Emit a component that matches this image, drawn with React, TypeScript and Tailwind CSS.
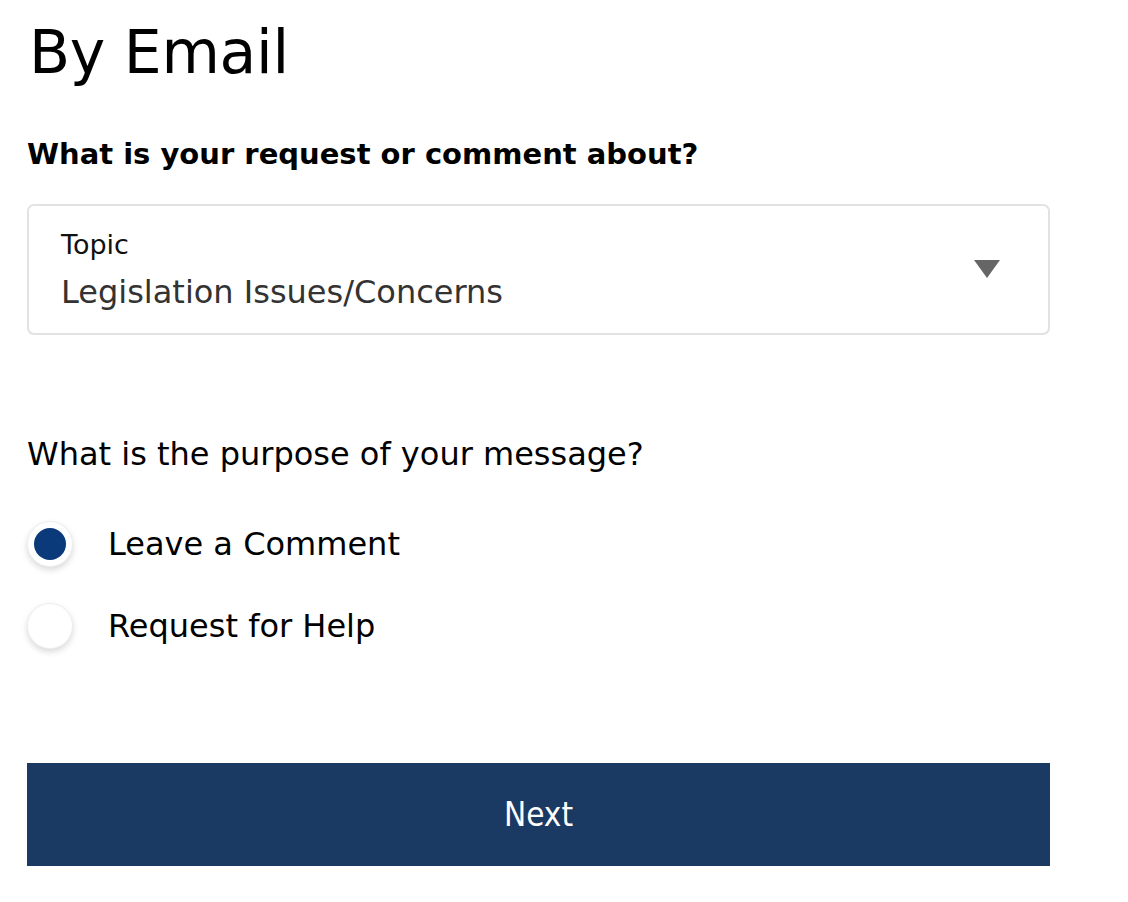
import { useState } from 'react'

const options = ['Leave a Comment', 'Request for Help']

export default function App() {
  const [purpose, setPurpose] = useState(options[0])

  return (
    <main className="min-h-screen bg-white text-black" style={{ fontFamily: '"DejaVu Sans", "Open Sans", sans-serif' }}>
      <div className="w-[1023px] ml-[27px] pt-[12px]">
        <h1 className="text-[60px] leading-[80px] font-normal ml-[2px] tracking-[-0.3px]">By Email</h1>

        <p className="mt-[44px] text-[29px] leading-[36px] font-semibold">What is your request or comment about?</p>

        {/* Topic select */}
        <div className="mt-[32px] h-[131px] border-2 border-[#e2e2e2] rounded-[7px] flex items-center justify-between pl-[32px] pr-[48px]">
          <div className="flex flex-col">
            <span className="text-[27px] leading-[30px] text-[#111]">Topic</span>
            <span className="mt-[14px] text-[32px] leading-[36px] text-[#333]">Legislation Issues/Concerns</span>
          </div>
          <svg width="26" height="18" viewBox="0 0 26 18" className="mt-[-2px]">
            <polygon points="0,0 26,0 13,18" fill="#666" />
          </svg>
        </div>

        <p className="mt-[101px] text-[32px] leading-[36px]">What is the purpose of your message?</p>

        <div className="mt-[49px] flex flex-col gap-[36px]">
          {options.map((opt) => (
            <label key={opt} className="flex items-center cursor-pointer" onClick={() => setPurpose(opt)}>
              <span className="w-[46px] h-[46px] rounded-full bg-white border border-[#eee] shadow-[0_3px_6px_rgba(0,0,0,0.15)] flex items-center justify-center">
                {purpose === opt && <span className="w-[32px] h-[32px] rounded-full bg-[#0b3a7a]" />}
              </span>
              <span className="ml-[35px] text-[32px] leading-[46px]">{opt}</span>
            </label>
          ))}
        </div>

        <button className="mt-[114px] w-full h-[103px] bg-[#1b3a63] text-white text-[33px]" style={{ fontFamily: '"DejaVu Sans Condensed", "DejaVu Sans", sans-serif' }}>
          Next
        </button>
      </div>
    </main>
  )
}
